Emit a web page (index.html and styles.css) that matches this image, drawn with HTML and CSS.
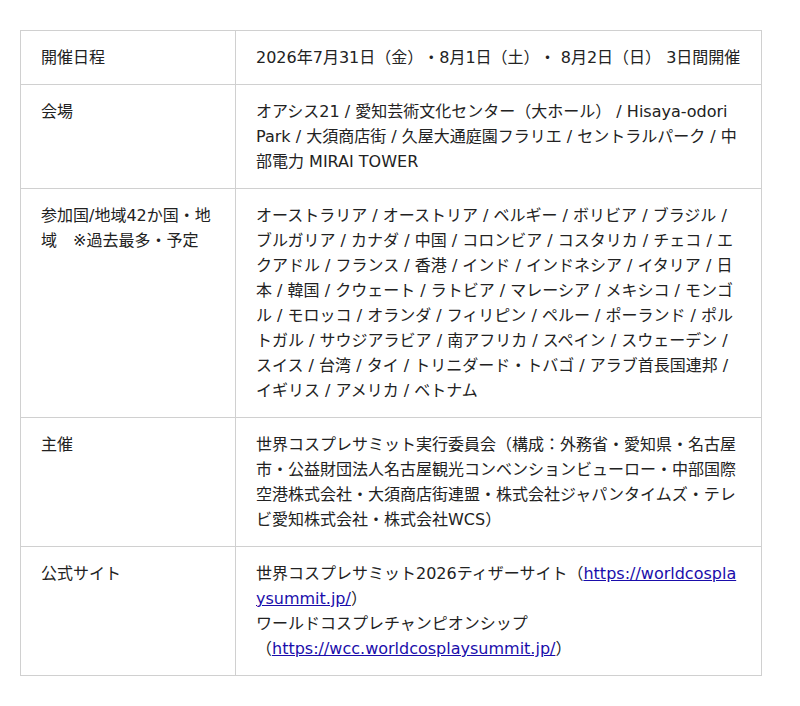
FILE: index.html
```html
<!DOCTYPE html>
<html lang="ja">
<head>
<meta charset="utf-8">
<link rel="stylesheet" href="styles.css">
</head>
<body>
<table class="info">
<tbody>
<tr><th>開催日程</th><td>2026年7月31日（金）・8月1日（土）・ 8月2日（日） 3日間開催</td></tr>
<tr><th>会場</th><td>オアシス21 / 愛知芸術文化センター（大ホール） / Hisaya-odori Park / 大須商店街 / 久屋大通庭園フラリエ / セントラルパーク / 中部電力 MIRAI TOWER</td></tr>
<tr><th>参加国/地域42か国・地域　※過去最多・予定</th><td>オーストラリア / オーストリア / ベルギー / ボリビア / ブラジル / ブルガリア / カナダ / 中国 / コロンビア / コスタリカ / チェコ / エクアドル / フランス / 香港 / インド / インドネシア / イタリア / 日本 / 韓国 / クウェート / ラトビア / マレーシア / メキシコ / モンゴル / モロッコ / オランダ / フィリピン / ペルー / ポーランド / ポルトガル / サウジアラビア / 南アフリカ / スペイン / スウェーデン / スイス / 台湾 / タイ / トリニダード・トバゴ / アラブ首長国連邦 / イギリス / アメリカ / ベトナム</td></tr>
<tr><th>主催</th><td>世界コスプレサミット実行委員会（構成：外務省・愛知県・名古屋市・公益財団法人名古屋観光コンベンションビューロー・中部国際空港株式会社・大須商店街連盟・株式会社ジャパンタイムズ・テレビ愛知株式会社・株式会社WCS）</td></tr>
<tr><th>公式サイト</th><td>世界コスプレサミット2026ティザーサイト（<a class="url" href="#">https://worldcosplaysummit.jp/</a>）<br>ワールドコスプレチャンピオンシップ<br>（<a class="url" href="#">https://wcc.worldcosplaysummit.jp/</a>）</td></tr>
</tbody>
</table>
</body>
</html>
```
FILE: styles.css
```css
html, body {
  margin: 0;
  padding: 0;
  background: #fff;
}
body {
  padding: 30px 20px;
  font-family: "DejaVu Sans", "Noto Sans CJK JP", sans-serif;
  font-size: 16px;
  line-height: 25px;
  color: #222;
  text-spacing-trim: space-all;
}
.info {
  width: 742px;
  border-collapse: collapse;
  table-layout: fixed;
}
.info th, .info td {
  border: 1px solid #d0d0d0;
  padding: 14px 20px;
  vertical-align: top;
  text-align: left;
  font-weight: normal;
  overflow-wrap: anywhere;
}
.info th {
  width: 174px;
}
.url {
  color: #1a0dab;
  text-decoration: underline;
  word-break: break-all;
}
```
